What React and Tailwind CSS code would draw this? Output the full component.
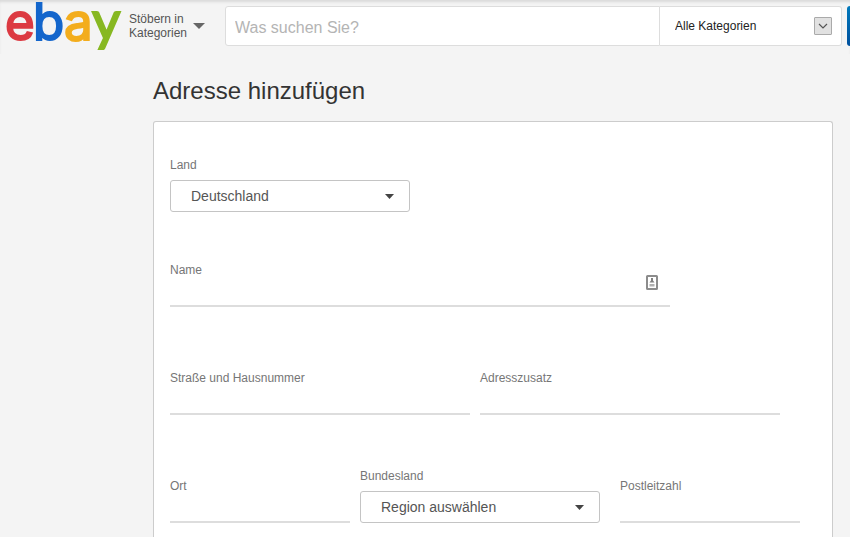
const countries = ["Deutschland", "Österreich", "Schweiz"];
const regions = ["Region auswählen", "Bayern", "Berlin", "Hessen", "Sachsen"];

function Caret({ className }) {
  return (
    <svg
      className={className}
      viewBox="0 0 10 6"
      preserveAspectRatio="none"
      fill="currentColor"
      aria-hidden="true"
    >
      <path d="M0 0h10L5 6z" />
    </svg>
  );
}

function Logo() {
  return (
    <a href="/" aria-label="ebay" className="shrink-0">
      <svg
        className="block h-[54px] w-[124px] overflow-visible font-[Inter,Arial,sans-serif] text-[51px]"
        viewBox="0 0 124 54"
        strokeWidth="2"
      >
        <text x="5" y="40" fill="#dc3a42" stroke="#dc3a42">e</text>
        <text x="33" y="40" fill="#1466cc" stroke="#1466cc">b</text>
        <text x="64" y="40" fill="#f3ad1d" stroke="#f3ad1d">a</text>
        <text
          x="92"
          y="40"
          fill="#87b822"
          stroke="#87b822"
          className="font-[Lato,Arial,sans-serif] text-[55px]"
        >
          y
        </text>
      </svg>
    </a>
  );
}

function Header() {
  return (
    <header className="flex items-start shadow-[inset_0_3px_3px_-1px_#d9d9d9]">
      <Logo />
      <button
        type="button"
        className="mt-3 ml-[5px] flex w-24 shrink-0 items-center gap-[6px] text-left text-[12px] leading-[14px] text-[#555]"
      >
        <span>
          Stöbern in
          <br />
          Kategorien
        </span>
        <Caret className="h-[6px] w-3 shrink-0 text-[#666]" />
      </button>
      <form className="mt-[6px] flex h-10 min-w-0 flex-1">
        <input
          type="search"
          aria-label="Suche"
          placeholder="Was suchen Sie?"
          className="min-w-0 flex-1 rounded-l-[3px] border border-[#ddd] bg-white px-[9px] pt-[3px] text-[16px] text-[#333] outline-none placeholder:text-[#b4b4b4]"
        />
        <div className="relative w-[182px] shrink-0">
          <select
            aria-label="Kategorie"
            className="h-full w-full appearance-none rounded-r-[3px] border border-l-0 border-[#ddd] bg-white pl-[15px] text-[12px] text-[#222] outline-none"
          >
            <option>Alle Kategorien</option>
            <option>Elektronik</option>
            <option>Mode</option>
          </select>
          <span className="pointer-events-none absolute top-[11px] right-[10px] flex h-[18px] w-[18px] items-center justify-center rounded-[1px] border border-[#aaa] bg-[#e1e1e1]">
            <svg className="h-[6px] w-[10px]" viewBox="0 0 10 6" fill="none" stroke="#555" strokeWidth="1.2">
              <path d="M1 1l4 4 4-4" />
            </svg>
          </span>
        </div>
        <button
          type="submit"
          aria-label="Finden"
          className="-mr-[37px] ml-[5px] w-10 shrink-0 rounded-[3px] bg-gradient-to-b from-[#0079bc] to-[#00509d]"
        />
      </form>
    </header>
  );
}

function TextField({ id, label, className, icon }) {
  return (
    <div className={className}>
      <label htmlFor={id} className="block text-[12px] leading-4 text-[#767676]">
        {label}
      </label>
      <div className="relative">
        <input
          id={id}
          type="text"
          className="block h-[29px] w-full border-b-2 border-[#ddd] bg-transparent text-[14px] text-[#555] outline-none"
        />
        {icon}
      </div>
    </div>
  );
}

function SelectField({ id, label, options }) {
  return (
    <div className="w-60">
      <label htmlFor={id} className="block text-[12px] leading-4 text-[#767676]">
        {label}
      </label>
      <div className="relative mt-[7px]">
        <select
          id={id}
          className="block h-8 w-full appearance-none rounded-[3px] border border-[#c4c4c4] bg-white pl-5 text-[14px] text-[#555] outline-none"
        >
          {options.map((option) => (
            <option key={option}>{option}</option>
          ))}
        </select>
        <Caret className="pointer-events-none absolute top-[14px] right-4 h-[5px] w-[9px] text-[#444]" />
      </div>
    </div>
  );
}

function ContactIcon() {
  return (
    <svg
      className="pointer-events-none absolute top-[-3px] right-3 h-[15px] w-3"
      viewBox="0 0 12 15"
      fill="none"
      aria-hidden="true"
    >
      <rect x="1" y="1" width="10" height="13" rx="0.5" fill="#fff" stroke="#8c8c8c" strokeWidth="2" />
      <path d="M5 3h2v2.500l1.500 2h-5l1.500-2z" fill="#808080" />
      <path d="M3.500 9h5v2.500h-5z" fill="#b0b0b0" />
    </svg>
  );
}

export default function App() {
  return (
    <div className="min-h-screen overflow-x-clip bg-[#f4f4f4] font-['Liberation_Sans',Arial,sans-serif]">
      <Header />
      <main className="mr-[17px] ml-[153px] pt-[21px]">
        <h1 className="text-[24px] leading-8 text-[#333]">Adresse hinzufügen</h1>
        <form className="mt-[14px] rounded-t-[3px] border border-b-0 border-[#ccc] bg-white px-4 pt-[35px] pb-[14px]">
          <SelectField id="country" label="Land" options={countries} />
          <TextField
            id="name"
            label="Name"
            className="mt-[50px] max-w-[500px]"
            icon={<ContactIcon />}
          />
          <div className="mt-[63px] flex gap-[10px]">
            <TextField id="street" label="Straße und Hausnummer" className="w-[300px]" />
            <TextField id="extra" label="Adresszusatz" className="w-[300px]" />
          </div>
          <div className="mt-[53px] flex items-end">
            <TextField id="city" label="Ort" className="mr-[10px] w-[180px]" />
            <SelectField id="region" label="Bundesland" options={regions} />
            <TextField id="zip" label="Postleitzahl" className="ml-5 w-[180px]" />
          </div>
        </form>
      </main>
    </div>
  );
}
